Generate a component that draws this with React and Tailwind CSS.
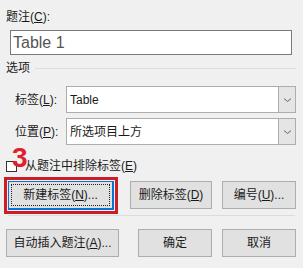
import React from "react";

const font = { fontFamily: '"Liberation Sans","Noto Sans CJK SC",sans-serif' };

function Select({ value }) {
  return (
    <div className="flex h-[27px] w-[230px] border border-[#adadad] bg-white">
      <div className="flex flex-1 items-center pl-[3px] text-[12px] text-[#1a1a1a]">{value}</div>
      <div className="flex w-[17px] items-center justify-center border-l border-[#adadad] bg-[#e5e5e5]">
        <svg width="9" height="6" viewBox="0 0 9 6">
          <path d="M1 1.5 L4.5 4.5 L8 1.5" fill="none" stroke="#606060" strokeWidth="1" />
        </svg>
      </div>
    </div>
  );
}

function Btn({ children, className = "" }) {
  return (
    <div
      className={`flex h-[28px] items-center justify-center border border-[#adadad] bg-[#e1e1e1] text-[12px] text-[#1a1a1a] ${className}`}
    >
      {children}
    </div>
  );
}

export default function App() {
  return (
    <div className="relative h-[268px] w-[303px] overflow-hidden bg-[#f0f0f0]" style={font}>
      <div className="pl-[6px] pt-[10px] text-[12px] leading-[14px] text-[#1a1a1a]">
        题注(<u>C</u>):
      </div>
      <div className="ml-[10px] mt-[6px] flex h-[25px] w-[282px] items-center border border-[#7a7a7a] bg-white pl-[2px] text-[16px] text-[#555]">
        Table 1
      </div>
      <div className="mt-[6px] flex h-[14px] items-center pl-[6px] text-[12px] text-[#1a1a1a]">
        <span>选项</span>
        <div className="ml-[5px] mr-[7px] h-px flex-1 bg-[#dcdcdc]" />
      </div>
      <div className="mt-[11px] flex items-center">
        <div className="w-[66px] pl-[15px] text-[12px] text-[#1a1a1a]">
          标签(<u>L</u>):
        </div>
        <Select value="Table" />
      </div>
      <div className="mt-[5px] flex items-center">
        <div className="w-[66px] pl-[15px] text-[12px] text-[#1a1a1a]">
          位置(<u>P</u>):
        </div>
        <Select value="所选项目上方" />
      </div>
      <div className="relative mt-[15px] flex h-[12px] items-center pl-[6px] text-[12px] text-[#1a1a1a]">
        <div className="h-[11px] w-[11px] border border-[#333] bg-white" />
        <span className="ml-[8px]">
          从题注中排除标签(<u>E</u>)
        </span>
        <span className="absolute left-[12px] top-[-16px] text-[28px] font-bold leading-[28px] text-[#e0202a]">
          3
        </span>
      </div>
      <div className="mt-[5px] flex items-start">
        <div className="ml-[4px] border-[3px] border-[#d01c24] p-px">
          <div className="h-[29px] w-[106px] border border-[#0078d7] border-b-2 border-r-2 bg-[#e1e1e1] p-[2px]">
            <div className="flex h-full items-center justify-center border border-dotted border-[#222] text-[12px] text-[#1a1a1a]">
              新建标签(<u>N</u>)...
            </div>
          </div>
        </div>
        <Btn className="ml-[12px] mt-[4px] w-[82px]">
          删除标签(<u>D</u>)
        </Btn>
        <Btn className="ml-[10px] mt-[4px] w-[74px]">
          编号(<u>U</u>)...
        </Btn>
      </div>
      <div className="mx-[8px] mt-px h-px bg-[#dcdcdc]" />
      <div className="mt-[13px] flex">
        <Btn className="ml-[6px] w-[113px]">
          自动插入题注(<u>A</u>)...
        </Btn>
        <Btn className="ml-[19px] w-[74px]">确定</Btn>
        <Btn className="ml-[10px] w-[74px]">取消</Btn>
      </div>
    </div>
  );
}
